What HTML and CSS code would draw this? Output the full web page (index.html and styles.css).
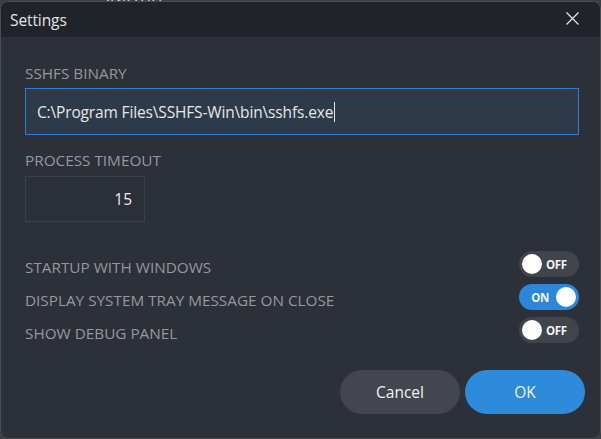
FILE: index.html
```html
<!DOCTYPE html>
<html>
<head>
<meta charset="utf-8">
<link rel="stylesheet" href="styles.css">
</head>
<body>
<div class="backdrop-text">Startup</div>
<div class="dialog">
  <div class="titlebar">
    <span class="title">Settings</span>
    <svg class="close" width="13" height="13" viewBox="0 0 13 13"><path d="M0.5 0.5 L12.5 12.5 M12.5 0.5 L0.5 12.5" stroke="#e8e8e8" stroke-width="1.2" fill="none"/></svg>
  </div>
  <div class="content">
    <div class="label">SSHFS BINARY</div>
    <div class="input path"><span>C:\Program Files\SSHFS-Win\bin\sshfs.exe</span><span class="caret"></span></div>
    <div class="label label-gap">PROCESS TIMEOUT</div>
    <div class="input number">15</div>
    <div class="toggles">
      <div class="row"><span class="label">STARTUP WITH WINDOWS</span><span class="toggle off"><span class="knob"></span><span class="tt">OFF</span></span></div>
      <div class="row"><span class="label">DISPLAY SYSTEM TRAY MESSAGE ON CLOSE</span><span class="toggle on"><span class="tt">ON</span><span class="knob"></span></span></div>
      <div class="row"><span class="label">SHOW DEBUG PANEL</span><span class="toggle off"><span class="knob"></span><span class="tt">OFF</span></span></div>
    </div>
  </div>
  <div class="buttons">
    <button class="btn cancel">Cancel</button>
    <button class="btn ok">OK</button>
  </div>
</div>
</body>
</html>
```
FILE: styles.css
```css
html, body {
  margin: 0;
  padding: 0;
  background: #3b3e45;
  font-family: "Open Sans", "Noto Sans", sans-serif;
  overflow: hidden;
}
.backdrop-text {
  position: absolute;
  left: 100px;
  top: -14px;
  font-size: 18px;
  color: #cfd0d3;
}
.dialog {
  position: relative;
  margin-top: 1px;
  width: 601px;
  height: 438px;
  box-sizing: border-box;
  border: 1px solid #4a4d54;
  border-radius: 8px;
  background: #2c3039;
  overflow: hidden;
  display: flex;
  flex-direction: column;
}
.titlebar {
  height: 35px;
  flex: none;
  background: #202329;
  display: flex;
  align-items: center;
  justify-content: space-between;
  padding: 0 21px 0 9px;
}
.title {
  font-size: 15.5px;
  color: #e4e5e7;
  letter-spacing: -0.1px;
}
.close { display: block; margin-top: -2px; }
.content {
  padding: 26px 21px 0 24px;
  display: flex;
  flex-direction: column;
}
.label {
  font-size: 15.3px;
  line-height: 20px;
  color: #96989d;
  letter-spacing: 0;
}
.input {
  box-sizing: border-box;
  display: flex;
  align-items: center;
}
.path {
  margin-top: 5px;
  height: 47px;
  border: 1px solid #2f7fcc;
  background: #2d3a4a;
  padding-left: 11px;
  font-size: 15.5px;
  color: #e6e7e9;
  letter-spacing: -0.15px;
}
.caret {
  display: inline-block;
  width: 1px;
  height: 20px;
  background: #e6e7e9;
  margin-left: 1px;
}
.label-gap { margin-top: 15px; }
.number {
  margin-top: 6px;
  width: 120px;
  height: 46px;
  border: 1px solid #3c4048;
  background: #2b2f37;
  justify-content: flex-end;
  padding-right: 12px;
  font-size: 15.5px;
  color: #eceded;
}
.toggles {
  margin-top: 29px;
  display: flex;
  flex-direction: column;
  gap: 7px;
}
.row {
  display: flex;
  align-items: center;
  justify-content: space-between;
  height: 26px;
}
.row .label { margin-top: 5px; }
.toggle {
  width: 60px;
  height: 26px;
  border-radius: 13px;
  box-sizing: border-box;
  display: flex;
  align-items: center;
  padding: 0 3px;
  gap: 4px;
}
.toggle.off { background: #40444c; }
.toggle.on { background: #2d87d9; justify-content: flex-end; gap: 7px; }
.knob {
  width: 20px;
  height: 20px;
  border-radius: 50%;
  background: #ffffff;
}
.tt {
  font-size: 11.5px;
  font-weight: 700;
  color: #f3f3f3;
  letter-spacing: -0.4px;
}
.buttons {
  margin-top: 27px;
  display: flex;
  justify-content: flex-end;
  gap: 5px;
  padding-right: 15px;
}
.btn {
  width: 120px;
  height: 44px;
  border: none;
  border-radius: 22px;
  font-family: inherit;
  font-size: 15.5px;
  color: #f2f2f2;
}
.cancel { background: #43464e; }
.ok { background: #2e8bdc; }
```
